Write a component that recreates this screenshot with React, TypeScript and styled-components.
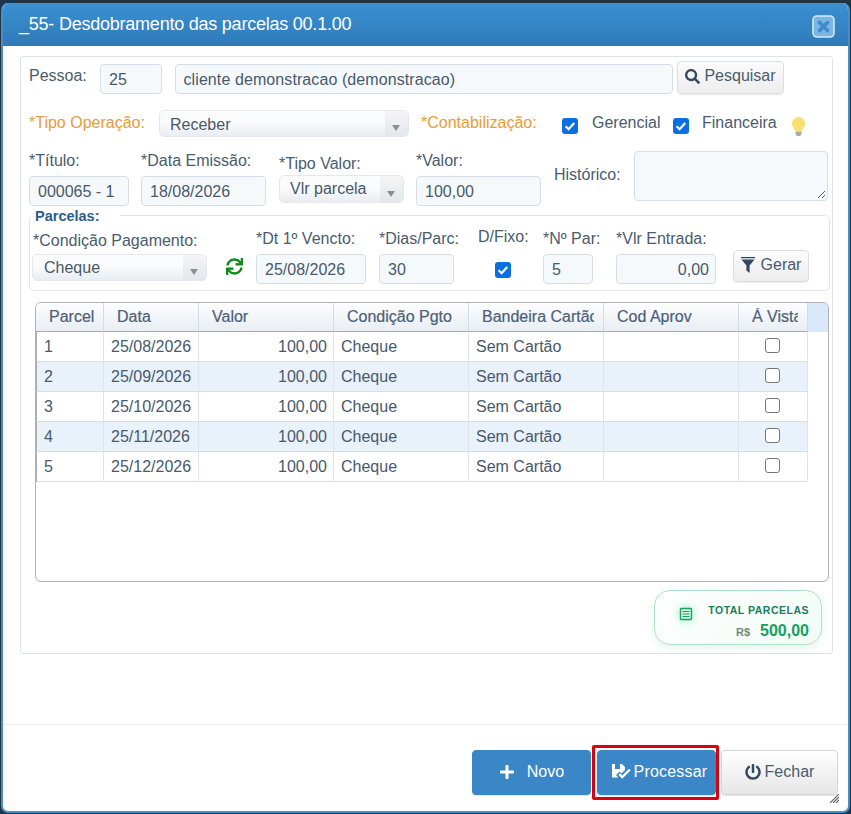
import React from "react";
import styled, { createGlobalStyle } from "styled-components";
import { FaSearch, FaSync, FaPlus, FaPowerOff } from "react-icons/fa";

const Global = createGlobalStyle`
  html, body { margin: 0; padding: 0; background: #1e3548; }
  body { width: 851px; height: 814px; overflow: hidden; font-family: "Liberation Sans", Arial, sans-serif; }
`;

const Page = styled.div`
  width: 851px;
  height: 814px;
  padding: 3px 0 0 1px;
  box-sizing: border-box;
`;
const Window = styled.div`
  width: 849px;
  height: 810px;
  box-sizing: border-box;
  border: 2px solid #4a8ec9;
  border-top: 0;
  border-radius: 7px;
  background: #fff;
  display: flex;
  flex-direction: column;
  position: relative;
  overflow: hidden;
`;
const Header = styled.div`
  height: 43px;
  margin: 0 -2px;
  flex: none;
  display: flex;
  align-items: center;
  justify-content: space-between;
  padding: 0 15px 0 18px;
  box-sizing: border-box;
  background: linear-gradient(#3b90d1, #2f7ab9);
  color: #fff;
`;
const Title = styled.div`
  font-size: 18px;
  letter-spacing: -0.23px;
  margin-top: -1px;
`;
const CloseBox = styled.svg`
  width: 23px;
  height: 23px;
  display: block;
  margin-top: 3px;
`;
const Body = styled.div`
  flex: 1;
  padding: 10px 15px 0 17px;
  min-height: 0;
`;
const Panel = styled.div`
  height: 598px;
  box-sizing: border-box;
  border: 1px solid #dfe3e6;
  border-radius: 3px;
  padding: 0 0 0 8px;
  position: relative;
`;
const Row = styled.div<{ $h: number; $mt?: number }>`
  display: flex;
  align-items: flex-start;
  height: ${(p) => p.$h}px;
  margin-top: ${(p) => p.$mt ?? 0}px;
`;
const Label = styled.span<{ $w?: number; $mt?: number; $warn?: boolean; $ml?: number }>`
  display: block;
  flex: none;
  width: ${(p) => (p.$w ? `${p.$w}px` : "auto")};
  margin-top: ${(p) => p.$mt ?? 0}px;
  margin-left: ${(p) => p.$ml ?? 0}px;
  font-size: 16px;
  line-height: 18px;
  white-space: nowrap;
  color: ${(p) => (p.$warn ? "#e89c35" : "#4a5c6c")};
`;
const Input = styled.div<{ $w: number; $h?: number; $ml?: number; $mt?: number; $right?: boolean }>`
  flex: none;
  box-sizing: border-box;
  width: ${(p) => p.$w}px;
  height: ${(p) => p.$h ?? 30}px;
  margin-left: ${(p) => p.$ml ?? 0}px;
  margin-top: ${(p) => p.$mt ?? 0}px;
  padding: ${(p) => (p.$right ? "1px 6px 0 0" : "1px 0 0 8px")};
  text-align: ${(p) => (p.$right ? "right" : "left")};
  border: 1px solid #d6dee5;
  border-radius: 4px;
  background: #f5f9fc;
  color: #48596a;
  font-size: 16px;
  line-height: ${(p) => (p.$h ?? 30) - 3}px;
  white-space: nowrap;
  position: relative;
`;
const NameInput = styled(Input)`
  letter-spacing: 0.09px;
  padding-left: 7.5px;
`;
const Select = styled.div<{ $w: number; $h?: number; $lh?: number; $ml?: number; $mt?: number; $tx?: number }>`
  flex: none;
  box-sizing: border-box;
  width: ${(p) => p.$w}px;
  height: ${(p) => p.$h ?? 27}px;
  margin-left: ${(p) => p.$ml ?? 0}px;
  margin-top: ${(p) => p.$mt ?? 0}px;
  padding-left: ${(p) => p.$tx ?? 10}px;
  border: 1px solid #e4e8ec;
  border-radius: 5px;
  background: linear-gradient(#fbfcfd, #fafbfc 45%, #e9edf1);
  color: #48596a;
  font-size: 16px;
  line-height: ${(p) => p.$lh ?? 25}px;
  position: relative;
  &::before {
    content: "";
    position: absolute;
    right: 0;
    top: 0;
    bottom: 0;
    width: 23px;
    border-radius: 0 5px 5px 0;
    background: linear-gradient(#f4f6f8, #e3e7eb);
  }
  &::after {
    content: "";
    position: absolute;
    right: 8px;
    bottom: 5px;
    border-left: 4px solid transparent;
    border-right: 4px solid transparent;
    border-top: 6px solid #8a8f94;
  }
`;
const Btn = styled.div<{ $w: number; $h: number; $ml?: number; $mt?: number; $gap?: number }>`
  flex: none;
  box-sizing: border-box;
  width: ${(p) => p.$w}px;
  height: ${(p) => p.$h}px;
  margin-left: ${(p) => p.$ml ?? 0}px;
  margin-top: ${(p) => p.$mt ?? 0}px;
  padding-bottom: 3px;
  display: flex;
  align-items: center;
  justify-content: center;
  gap: ${(p) => p.$gap ?? 4}px;
  border: 1px solid #dcdfe2;
  border-radius: 4px;
  background: linear-gradient(#fbfbfb, #ededed);
  box-shadow: 0 1px 1px rgba(0, 0, 0, 0.08);
  color: #4a5c6c;
  font-size: 16px;
`;
const Check = styled.span<{ $ml?: number; $mt?: number }>`
  flex: none;
  display: block;
  width: 16px;
  height: 16px;
  margin-left: ${(p) => p.$ml ?? 0}px;
  margin-top: ${(p) => p.$mt ?? 0}px;
  background: #0a6fe3;
  border-radius: 3px;
  svg { display: block; }
`;
const Field = styled.div<{ $w: number; $ml?: number; $pt?: number }>`
  flex: none;
  width: ${(p) => p.$w}px;
  margin-left: ${(p) => p.$ml ?? 0}px;
  padding-top: ${(p) => p.$pt ?? 1}px;
`;
const Fieldset = styled.div`
  box-sizing: border-box;
  width: 801px;
  height: 76px;
  margin-top: 14px;
  border: 1px solid #e2e5e8;
  border-radius: 5px;
  position: relative;
  padding-left: 2px;
`;
const Legend = styled.div`
  position: absolute;
  left: 1px;
  top: -7px;
  padding: 0 20px 0 4px;
  background: #fff;
  color: #2c5c8c;
  font-size: 14.5px;
  font-weight: bold;
  line-height: 14px;
`;
const TableBox = styled.div`
  box-sizing: border-box;
  width: 794px;
  height: 280px;
  margin: 11px 0 0 6px;
  border: 1px solid #aeb2b5;
  border-radius: 6px;
  overflow: hidden;
`;
const Table = styled.table`
  width: 792px;
  table-layout: fixed;
  border-collapse: separate;
  border-spacing: 0;
  font-size: 16px;
  color: #48596a;
`;
const Th = styled.th`
  height: 28px;
  padding: 0 9px 0 13px;
  text-align: left;
  font-weight: normal;
  font-size: 16px;
  color: #4c6076;
  -webkit-text-stroke: 0.2px #4c6076;
  background: linear-gradient(#fdfeff, #e8eef4);
  border-right: 1px solid #d3dde6;
  border-bottom: 1px solid #a9adb0;
`;
const ThText = styled.span`
  display: block;
  overflow: hidden;
  white-space: nowrap;
`;
const Filler = styled.th`
  padding: 0;
  background: #d9e9f9;
`;
const Td = styled.td<{ $alt?: boolean; $right?: boolean; $center?: boolean }>`
  box-sizing: border-box;
  height: 30px;
  padding: ${(p) => (p.$right ? "1px 6px 0 0" : p.$center ? "0 1px 0 0" : "1px 0 0 7px")};
  text-align: ${(p) => (p.$right ? "right" : p.$center ? "center" : "left")};
  background: ${(p) => (p.$alt ? "#e9f1fb" : "#fff")};
  border-right: 1px solid #dfe5ea;
  border-bottom: 1px solid #d6dde3;
  white-space: nowrap;
  overflow: hidden;
  &:first-child { border-left: 1px solid #a9adb0; }
`;
const Empty = styled.td`
  padding: 0;
  background: #fff;
`;
const Box = styled.span`
  display: inline-block;
  width: 13px;
  height: 13px;
  margin-top: -4px;
  vertical-align: middle;
  border: 1px solid #767676;
  border-radius: 3px;
  background: #fff;
`;
const TotalWrap = styled.div`
  display: flex;
  justify-content: flex-end;
  margin: 8px 10px 0 0;
`;
const TotalCard = styled.div`
  box-sizing: border-box;
  width: 168px;
  height: 55px;
  display: flex;
  align-items: center;
  padding: 10px 12px 0 24px;
  border: 1px solid #aee2c6;
  border-radius: 16px;
  background: linear-gradient(135deg, #ffffff, #f1fbf6);
  box-shadow: 0 3px 10px rgba(40, 190, 120, 0.14);
`;
const TotalIcon = styled.svg`
  width: 14px;
  height: 14px;
  flex: none;
  margin-top: -17px;
  filter: drop-shadow(0 0 5px rgba(60, 210, 140, 0.55));
`;
const TotalText = styled.div`
  flex: 1;
  text-align: right;
`;
const TotalLabel = styled.div`
  font-size: 10.5px;
  font-weight: bold;
  line-height: 14px;
  letter-spacing: 0.5px;
  color: #1d7d5c;
  white-space: nowrap;
`;
const TotalValue = styled.div`
  margin-top: 4px;
  font-size: 16px;
  line-height: 19px;
  font-weight: bold;
  color: #16a05e;
`;
const Currency = styled.span`
  font-size: 11px;
  color: #6f8a80;
  margin-right: 10px;
`;
const Footer = styled.div`
  flex: none;
  height: 87px;
  border-top: 1px solid #e8eaec;
  box-sizing: border-box;
  display: flex;
  justify-content: flex-end;
  gap: 5px;
  padding: 25px 10px 0 0;
  position: relative;
`;
const Action = styled.div<{ $w: number; $primary?: boolean; $gap?: number; $mr?: number; $pl?: number }>`
  box-sizing: border-box;
  width: ${(p) => p.$w}px;
  height: 45px;
  margin-right: ${(p) => p.$mr ?? 0}px;
  padding: 0 0 2px ${(p) => p.$pl ?? 0}px;
  display: flex;
  align-items: center;
  justify-content: center;
  gap: ${(p) => p.$gap ?? 4}px;
  border-radius: 4px;
  font-size: 16px;
  white-space: nowrap;
  border: 1px solid ${(p) => (p.$primary ? "#3a86c6" : "#d4d6d8")};
  background: ${(p) => (p.$primary ? "#3a86c6" : "linear-gradient(#fff, #e6e6e6)")};
  color: ${(p) => (p.$primary ? "#fff" : "#4a5c6c")};
  box-shadow: 0 1px 1px rgba(0, 0, 0, 0.12);
`;
const ProcessLabel = styled.span`
  letter-spacing: 0.2px;
`;
const Highlight = styled.div`
  position: absolute;
  left: 589px;
  top: 20px;
  width: 127px;
  height: 55px;
  box-sizing: border-box;
  border: 3px solid #d9000f;
  border-radius: 2px;
`;
const Grip = styled.svg`
  position: absolute;
  right: 9px;
  bottom: 8px;
  width: 9px;
  height: 9px;
`;
const Resize = styled.svg`
  position: absolute;
  right: 2px;
  bottom: 2px;
  width: 8px;
  height: 8px;
`;
const BulbIcon = styled.svg`
  flex: none;
  width: 17px;
  height: 21px;
  margin: 6px 0 0 12px;
`;

const Tick = () => (
  <svg width="16" height="16" viewBox="0 0 16 16">
    <path d="M3.6 8.2l3 3 5.6-6.2" fill="none" stroke="#fff" strokeWidth="2.2" />
  </svg>
);
const Bulb = () => (
  <BulbIcon viewBox="0 0 16 21">
    <path d="M8 1a6.6 6.6 0 0 0-6.6 6.6c0 2.6 1.7 4 2.6 5.6.4.8.5 1.3.6 1.9h6.8c.1-.6.2-1.1.6-1.9.9-1.6 2.6-3 2.6-5.6A6.6 6.6 0 0 0 8 1z" fill="#f8df6e" />
    <path d="M5 15.5h6v2.6L9.6 20H6.4L5 18.1z" fill="#a9a9a0" />
  </BulbIcon>
);

const rows = [
  ["1", "25/08/2026"],
  ["2", "25/09/2026"],
  ["3", "25/10/2026"],
  ["4", "25/11/2026"],
  ["5", "25/12/2026"],
];

const heads = ["Parcel", "Data", "Valor", "Condição Pgto", "Bandeira Cartão", "Cod Aprov", "Á Vista"];

export default function App() {
  return (
    <Page>
      <Global />
      <Window>
        <Header>
          <Title>_55- Desdobramento das parcelas 00.1.00</Title>
          <CloseBox viewBox="0 0 23 23">
            <rect x="1" y="1" width="21" height="21" rx="4" fill="#7ab6e4" stroke="#d6e9f8" strokeWidth="1.6" />
            <path d="M7.5 7.5l8 8M15.5 7.5l-8 8" stroke="#3f8bc8" strokeWidth="3.6" strokeLinecap="round" />
          </CloseBox>
        </Header>
        <Body>
          <Panel>
            <Row $h={37} $mt={4}>
              <Label $w={71} $mt={6}>Pessoa:</Label>
              <Input $w={62} $mt={3}>25</Input>
              <NameInput $w={498} $ml={13} $mt={3}>cliente demonstracao (demonstracao)</NameInput>
              <Btn $w={107} $h={33} $ml={4}>
                <FaSearch size={15} color="#33495e" />
                Pesquisar
              </Btn>
            </Row>
            <Row $h={41} $mt={12}>
              <Label $w={130} $mt={4} $warn>*Tipo Operação:</Label>
              <Select $w={250} $lh={27}>Receber</Select>
              <Label $w={141} $ml={12} $mt={4} $warn>*Contabilização:</Label>
              <Check $mt={8}><Tick /></Check>
              <Label $w={81} $ml={14} $mt={4}>Gerencial</Label>
              <Check $mt={8}><Tick /></Check>
              <Label $w={76} $ml={13} $mt={4}>Financeira</Label>
              <Bulb />
            </Row>
            <Row $h={50}>
              <Field $w={100}>
                <Label>*Título:</Label>
                <Input $w={100} $mt={6}>000065 - 1</Input>
              </Field>
              <Field $w={125} $ml={12}>
                <Label>*Data Emissão:</Label>
                <Input $w={125} $mt={6}>18/08/2026</Input>
              </Field>
              <Field $w={125} $ml={13} $pt={4}>
                <Label>*Tipo Valor:</Label>
                <Select $w={125} $h={28} $lh={26} $mt={2} $tx={10}>Vlr parcela</Select>
              </Field>
              <Field $w={125} $ml={12}>
                <Label>*Valor:</Label>
                <Input $w={125} $mt={6}>100,00</Input>
              </Field>
              <Label $w={80} $ml={13} $mt={15}>Histórico:</Label>
              <Input $w={194} $h={50}>
                <Resize viewBox="0 0 8 8">
                  <path d="M1 8l7-7M5 8l3-3" stroke="#555" strokeWidth="1" />
                </Resize>
              </Input>
            </Row>
            <Fieldset>
              <Legend>Parcelas:</Legend>
              <Row $h={66} $mt={13}>
                <Field $w={175} $pt={3}>
                  <Label $ml={1}>*Condição Pagamento:</Label>
                  <Select $w={175} $mt={4} $tx={11}>Cheque</Select>
                </Field>
                <FaSync size={17} color="#0f8a1f" style={{ flex: "none", marginLeft: 19, marginTop: 29 }} />
                <Field $w={110} $ml={13}>
                  <Label>*Dt 1º Vencto:</Label>
                  <Input $w={110} $mt={6}>25/08/2026</Input>
                </Field>
                <Field $w={75} $ml={13}>
                  <Label>*Dias/Parc:</Label>
                  <Input $w={75} $mt={6}>30</Input>
                </Field>
                <Field $w={65} $ml={24} $pt={0}>
                  <Label $mt={-1}>D/Fixo:</Label>
                  <Check $ml={17} $mt={16}><Tick /></Check>
                </Field>
                <Field $w={50}>
                  <Label>*Nº Par:</Label>
                  <Input $w={50} $mt={6}>5</Input>
                </Field>
                <Field $w={100} $ml={23}>
                  <Label>*Vlr Entrada:</Label>
                  <Input $w={100} $mt={6} $right>0,00</Input>
                </Field>
                <Btn $w={76} $h={32} $ml={17} $mt={21} $gap={6}>
                  <svg width="14" height="16" viewBox="0 0 14 16">
                    <path d="M0 0h14v1.2H0zM0.5 2.6h13L8.6 8.5V16L5.4 13.5V8.5z" fill="#33495e" />
                  </svg>
                  Gerar
                </Btn>
              </Row>
            </Fieldset>
            <TableBox>
              <Table>
                <colgroup>
                  <col width={68} />
                  <col width={95} />
                  <col width={135} />
                  <col width={135} />
                  <col width={135} />
                  <col width={135} />
                  <col width={69} />
                  <col />
                </colgroup>
                <thead>
                  <tr>
                    {heads.map((h) => (
                      <Th key={h}><ThText>{h}</ThText></Th>
                    ))}
                    <Filler />
                  </tr>
                </thead>
                <tbody>
                  {rows.map(([n, d], i) => (
                    <tr key={n}>
                      <Td $alt={i % 2 === 1}>{n}</Td>
                      <Td $alt={i % 2 === 1}>{d}</Td>
                      <Td $alt={i % 2 === 1} $right>100,00</Td>
                      <Td $alt={i % 2 === 1}>Cheque</Td>
                      <Td $alt={i % 2 === 1}>Sem Cartão</Td>
                      <Td $alt={i % 2 === 1} />
                      <Td $alt={i % 2 === 1} $center><Box /></Td>
                      <Empty />
                    </tr>
                  ))}
                </tbody>
              </Table>
            </TableBox>
            <TotalWrap>
              <TotalCard>
                <TotalIcon viewBox="0 0 14 14">
                  <rect x="1.5" y="1.5" width="11" height="11" rx="1" fill="#d8f5e6" stroke="#17a05e" strokeWidth="1.4" />
                  <path d="M3.5 4.5h7M3.5 7h7M3.5 9.5h7" stroke="#17a05e" strokeWidth="1.2" />
                </TotalIcon>
                <TotalText>
                  <TotalLabel>TOTAL PARCELAS</TotalLabel>
                  <TotalValue><Currency>R$</Currency>500,00</TotalValue>
                </TotalText>
              </TotalCard>
            </TotalWrap>
          </Panel>
        </Body>
        <Footer>
          <Action $w={119} $primary $gap={12} $mr={1}>
            <FaPlus size={16} />
            Novo
          </Action>
          <Action $w={119} $primary $gap={3} $pl={6}>
            <svg width="19" height="15" viewBox="0 0 19 15">
              <path d="M0 0h3v5h5V0h2l3 3v3L9.5 9.5l-2-2L4 11l2.5 2.5H0z" fill="#fff" />
              <path d="M7.2 10l3 3L18 5.5" fill="none" stroke="#fff" strokeWidth="2.4" />
            </svg>
            <ProcessLabel>Processar</ProcessLabel>
          </Action>
          <Action $w={117} $gap={4}>
            <FaPowerOff size={16} color="#33495e" />
            Fechar
          </Action>
          <Highlight />
          <Grip viewBox="0 0 9 9">
            <path d="M0 9l9-9M3 9l6-6M6 9l3-3" stroke="#666" strokeWidth="1.2" />
          </Grip>
        </Footer>
      </Window>
    </Page>
  );
}
